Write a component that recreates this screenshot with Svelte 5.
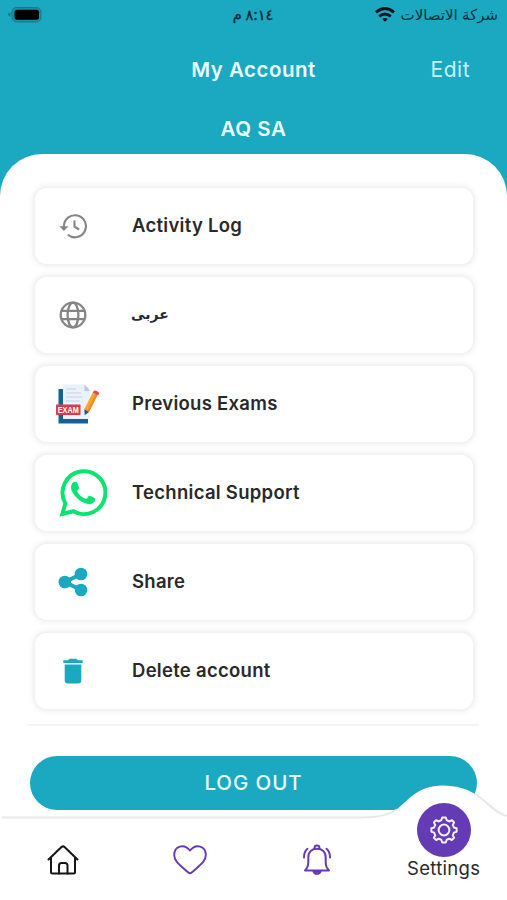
<script lang="ts">
  type IconName = 'history' | 'globe' | 'exam' | 'whatsapp' | 'share' | 'trash';

  interface MenuItem {
    icon: IconName;
    label: string;
    rtl?: boolean;
  }

  const items: MenuItem[] = [
    { icon: 'history', label: 'Activity Log' },
    { icon: 'globe', label: 'عربى', rtl: true },
    { icon: 'exam', label: 'Previous Exams' },
    { icon: 'whatsapp', label: 'Technical Support' },
    { icon: 'share', label: 'Share' },
    { icon: 'trash', label: 'Delete account' },
  ];
</script>

<div class="screen">
  <header class="header">
    <div class="status-bar">
      <svg class="battery" width="34" height="16" viewBox="0 0 34 16">
        <path d="M2.600 5.200v4.600Q0 9 0 7.500T2.600 5.200Z" fill="#13788a" />
        <rect x="4" y=".5" width="29" height="14.500" rx="4.500" fill="#198fa4" stroke="#147b8d" />
        <rect x="6.500" y="2.800" width="24.500" height="10" rx="2.500" fill="#000" />
      </svg>
      <span class="clock" dir="rtl">٨:١٤ م</span>
      <div class="carrier">
        <svg width="20" height="15" viewBox="0 0 20 15" fill="none" stroke="#041418" stroke-width="2.900">
          <path d="M1 5.300Q10-2.200 19 5.300" />
          <path d="M4.200 9.300Q10 4.700 15.800 9.300" />
          <path d="M7.300 11.900Q10 9.900 12.700 11.900L10 14.800Z" fill="#041418" stroke="none" />
        </svg>
        <span dir="rtl">شركة الاتصالات</span>
      </div>
    </div>
    <div class="title-row">
      <h1>My Account</h1>
      <button class="edit">Edit</button>
    </div>
    <div class="user-name">AQ SA</div>
  </header>

  <main class="sheet">
    <div class="menu">
      {#each items as item}
        <button class="card">
          <span class="icon">
            {#if item.icon === 'history'}
              <svg width="28" height="25" viewBox="0 0 28 25" fill="none" stroke="#858585" stroke-width="2.100">
                <path d="M4.900 13V12.300A11 11 0 1 1 8.800 20.700" />
                <path d="M.3 12.200H9.400L4.900 16.900Z" fill="#858585" stroke="none" />
                <path d="M15.500 6.600V12.600L20.100 15.500" />
              </svg>
            {:else if item.icon === 'globe'}
              <svg width="28" height="28" viewBox="0 0 28 28" fill="none" stroke="#858585" stroke-width="2.300">
                <circle cx="14" cy="14" r="12.300" />
                <ellipse cx="14" cy="14" rx="5.400" ry="12.300" />
                <path d="M2.600 9.800H25.400M2.600 18.200H25.400" />
              </svg>
            {:else if item.icon === 'exam'}
              <svg class="exam" width="44" height="40" viewBox="0 0 44 40">
                <path d="M2.500 5H9V34H32V39.500H2.500Z" fill="#11648d" />
                <path d="M7 .5H29L34 6.500V35H7Z" fill="#e9f2fb" />
                <path d="M28.500.5V7H34.500Z" fill="#c2ccd8" />
                <path d="M10 5H20M10 9H25M10 13H26M10 17H24" stroke="#c7d3e2" stroke-width="1" />
                <rect y="20.500" width="24.500" height="10.500" rx=".8" fill="#d93d4c" />
                <text x="12.200" y="29.100" text-anchor="middle" textLength="21" lengthAdjust="spacingAndGlyphs">EXAM</text>
                <path d="M36.700 8.500L41.500 11L33 28L28.300 25.300Z" fill="#f9a72b" />
                <path d="M39.500 9.900L41.500 11L33 28L31 26.900Z" fill="#ef8b22" />
                <path d="M36.700 8.500L38 6.800Q39 6 41.500 7.500T43 10L41.800 11.500Z" fill="#e4485d" />
                <path d="M28.300 25.300L33 28L28.700 31.200Z" fill="#34536b" />
              </svg>
            {:else if item.icon === 'whatsapp'}
              <svg class="whatsapp" width="48" height="48" viewBox="0 0 24 24" fill="#0be471">
                <path d="M17.472 14.382c-.297-.149-1.758-.867-2.030-.967-.273-.099-.471-.148-.670.150-.197.297-.767.966-.940 1.164-.173.199-.347.223-.644.075-.297-.150-1.255-.463-2.390-1.475-.883-.788-1.480-1.761-1.653-2.059-.173-.297-.018-.458.130-.606.134-.133.298-.347.446-.520.149-.174.198-.298.298-.497.099-.198.050-.371-.025-.520-.075-.149-.669-1.612-.916-2.207-.242-.579-.487-.500-.669-.510-.173-.008-.371-.010-.570-.010-.198 0-.520.074-.792.372-.272.297-1.040 1.016-1.040 2.479 0 1.462 1.065 2.875 1.213 3.074.149.198 2.096 3.200 5.077 4.487.709.306 1.262.489 1.694.625.712.227 1.360.195 1.871.118.571-.085 1.758-.719 2.006-1.413.248-.694.248-1.289.173-1.413-.074-.124-.272-.198-.570-.347" />
                <path d="M1.700 22.500L3.200 17.100A10.700 10.700 0 1 1 7.200 21.100Z" fill="none" stroke="#0be471" stroke-width="2" />
              </svg>
            {:else if item.icon === 'share'}
              <svg width="30" height="30" viewBox="0 0 30 30" fill="#1ba8c1">
                <path d="M23 7L7 15L23 23" fill="none" stroke="#1ba8c1" stroke-width="4" />
                <circle cx="6.800" cy="15" r="6.300" />
                <circle cx="23" cy="7" r="6.300" />
                <circle cx="23" cy="23" r="6.300" />
              </svg>
            {:else}
              <svg width="20" height="26" viewBox="0 0 20 26" fill="#1ba8c1">
                <path d="M.3 2.200H5.200L6.500.7H13.500L14.800 2.200H19.700V5H.3Z" />
                <path d="M1.700 6.500H18.300V22.300Q18.300 25.500 15.200 25.500H4.800Q1.700 25.500 1.700 22.300Z" />
              </svg>
            {/if}
          </span>
          <span class="label" class:arabic={item.rtl}>{item.label}</span>
        </button>
      {/each}
    </div>
    <hr />
    <button class="logout">LOG OUT</button>
  </main>

  <nav class="tab-bar">
    <svg class="tab-shape" width="507" height="120" viewBox="0 0 507 120">
      <path d="M0 37.500H364C378 37.500 388 35 397 29C408 21 417 5.500 443 5.500C456 5.500 467 9 475 14C489 23 496 34 507 36V120H0Z" fill="#fff" />
      <path d="M2 37.500H364C378 37.500 388 35 397 29.500M475 14C489 23 496 34 507 36" fill="none" stroke="#e8e8e8" stroke-width="2" />
    </svg>
    <div class="tabs">
      <button class="tab" aria-label="Home">
        <svg width="32" height="32" viewBox="0 0 32 32" fill="none" stroke="#151515" stroke-width="2" stroke-linecap="round" stroke-linejoin="round">
          <path d="M1.500 15.500L14.500 3Q16 1.700 17.500 3L30.500 15.500" />
          <path d="M4 14V28Q4 29.500 5.500 29.500H26.500Q28 29.500 28 28V14" />
          <path d="M12 29.500V21.500Q12 19 14.500 19H18Q20.500 19 20.500 21.500V29.500" />
        </svg>
      </button>
      <button class="tab" aria-label="Favourites">
        <svg width="34" height="32" viewBox="0 0 34 32" fill="none" stroke="#643ab5" stroke-width="1.900" stroke-linejoin="round">
          <path d="M17 6.500C11-1 1.200 2 1.200 11C1.200 17.500 7 21 15.300 28.500Q17 30 18.700 28.500C27 21 32.800 17.500 32.800 11C32.800 2 23-1 17 6.500Z" />
        </svg>
      </button>
      <button class="tab" aria-label="Notifications">
        <svg width="28" height="32" viewBox="0 0 28 32" fill="none" stroke="#643ab5" stroke-width="2" stroke-linecap="round" stroke-linejoin="round">
          <path d="M11.600 4.800V3.500Q11.600 1.500 14 1.500T16.400 3.500V4.800" />
          <path d="M2 26.500L4.200 23.500Q5.300 21.500 5.300 18V13.500C5.300 7.800 9 4.800 14 4.800S22.700 7.800 22.700 13.500V18Q22.700 21.500 23.800 23.500L26 26.500Z" />
          <path d="M10.500 27.500Q11.500 29.800 14 29.800T17.500 27.500Z" />
          <path d="M1 13.500Q1 7.500 4.500 4.800M27 13.500Q27 7.500 23.500 4.800" />
        </svg>
      </button>
      <button class="tab active">
        <span class="tab-circle">
          <svg width="28" height="28" viewBox="0 0 28 28" fill="none" stroke="#f3effb" stroke-width="2" stroke-linejoin="round">
            <path d="M12.200 1.500H15.800L16.700 4.300Q18 4.600 19.300 5.500L22 4.200L24.100 6.500L22.700 9Q23.500 10 23.800 11.500L26.600 12.300V15.800L23.800 16.600Q23.500 18 22.700 19.200L24.100 21.800L21.800 24L19.300 22.700Q18 23.500 16.700 23.800L15.800 26.500H12.200L11.300 23.800Q10 23.500 8.700 22.700L6.200 24L3.900 21.800L5.300 19.200Q4.500 18 4.200 16.600L1.400 15.800V12.300L4.200 11.500Q4.500 10 5.300 9L3.900 6.500L6 4.200L8.700 5.500Q10 4.600 11.300 4.300Z" />
            <circle cx="14" cy="14" r="5.400" />
          </svg>
        </span>
        <span class="tab-label">Settings</span>
      </button>
    </div>
  </nav>
</div>

<style>
  :global(body) {
    margin: 0;
    background: #fff;
  }

  .screen {
    position: relative;
    width: 507px;
    height: 900px;
    overflow: hidden;
    background: #1ba8c1;
    font-family: Inter, 'DejaVu Sans', sans-serif;
  }

  button {
    margin: 0;
    padding: 0;
    border: none;
    background: none;
    font: inherit;
    cursor: pointer;
  }

  svg {
    display: block;
    flex-shrink: 0;
  }

  .header {
    height: 154px;
    color: #e9fcff;
  }

  .status-bar {
    display: grid;
    grid-template-columns: 1fr auto 1fr;
    align-items: center;
    height: 29px;
    padding: 0 9px 0 8px;
    color: #06323b;
    font-size: 15px;
    line-height: 20px;
  }

  .clock {
    color: #06262d;
    font-size: 14.500px;
    font-weight: 500;
    -webkit-text-stroke: 0.3px #06262d;
  }

  .carrier {
    display: flex;
    align-items: center;
    justify-content: flex-end;
    gap: 6px;
    white-space: nowrap;
  }

  .title-row {
    display: grid;
    grid-template-columns: 1fr auto 1fr;
    align-items: center;
    height: 80px;
  }

  h1 {
    grid-column: 2;
    margin: 0;
    font-size: 20.500px;
    font-weight: 600;
    letter-spacing: 0.5px;
  }

  .edit {
    justify-self: end;
    margin-right: 37px;
    color: #c9f3fa;
    font-size: 21px;
    letter-spacing: 0.5px;
  }

  .user-name {
    height: 39px;
    font-size: 20.500px;
    font-weight: 600;
    line-height: 39px;
    letter-spacing: 0.6px;
    text-align: center;
  }

  .sheet {
    height: 746px;
    box-sizing: border-box;
    padding: 34px 30px 0;
    border-radius: 42px 42px 0 0;
    background: #fff;
  }

  .menu {
    display: flex;
    flex-direction: column;
    gap: 13px;
    padding: 0 4px 0 5px;
  }

  .card {
    display: flex;
    align-items: center;
    height: 76px;
    border-radius: 12px;
    background: #fff;
    box-shadow: 0 0 2px 2px #f2f2f2, 0 0 4px 5px #f9f9f9;
    text-align: left;
  }

  .icon {
    display: flex;
    justify-content: center;
    width: 75px;
    margin-right: 22px;
  }

  .exam {
    margin-left: 11px;
  }

  .exam text {
    fill: #fff;
    font-family: 'Liberation Sans', sans-serif;
    font-size: 9px;
    font-weight: 700;
  }

  .whatsapp {
    margin-left: 20px;
  }

  .label {
    padding-bottom: 2px;
    color: #292929;
    font-size: 18.500px;
    font-weight: 600;
    letter-spacing: 0.28px;
  }

  .label.arabic {
    margin-left: -1px;
    font-family: 'DejaVu Sans', sans-serif;
    font-size: 14px;
    font-weight: 700;
    letter-spacing: 0;
  }

  hr {
    height: 2px;
    margin: 15px -2px 30px -2px;
    border: none;
    background: #f4f4f4;
  }

  .logout {
    display: block;
    width: 447px;
    height: 54px;
    padding-bottom: 1px;
    border-radius: 27px;
    background: #1ba8c1;
    color: #e9fcff;
    font-size: 20.500px;
    font-weight: 500;
    letter-spacing: 0.9px;
  }

  /* Floats over the bottom of the sheet so the bump covers the button */
  .tab-bar {
    position: absolute;
    left: 0;
    bottom: 0;
    width: 507px;
    height: 120px;
  }

  .tab-shape {
    position: absolute;
    top: 0;
    left: 0;
  }

  .tabs {
    position: relative;
    display: grid;
    grid-template-columns: repeat(4, 1fr);
    height: 100%;
  }

  .tab {
    display: flex;
    flex-direction: column;
    align-items: center;
    padding-top: 64px;
  }

  .tab.active {
    padding-top: 23px;
  }

  .tab-circle {
    display: flex;
    align-items: center;
    justify-content: center;
    width: 54px;
    height: 54px;
    border-radius: 50%;
    background: #643ab5;
  }

  .tab-label {
    color: #292929;
    font-size: 18.500px;
    line-height: 22px;
    letter-spacing: 0.3px;
  }
</style>
